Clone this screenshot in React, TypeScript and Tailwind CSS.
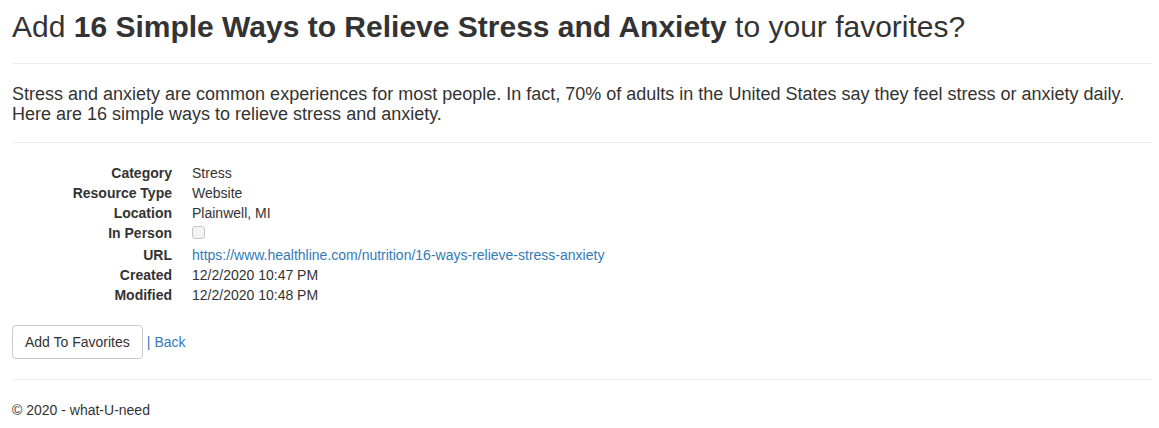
const details = [
  { label: 'Category', value: 'Stress' },
  { label: 'Resource Type', value: 'Website' },
  { label: 'Location', value: 'Plainwell, MI' },
];

const dates = [
  { label: 'Created', value: '12/2/2020 10:47 PM' },
  { label: 'Modified', value: '12/2/2020 10:48 PM' },
];

const App = () => {
  return (
    <div className="bg-white pl-3 pr-[7px] text-[14px] leading-[20px] text-[#333]" style={{ fontFamily: '"Liberation Sans", Arial, Helvetica, sans-serif' }}>
      {/* Title */}
      <h2 className="pt-[10px] text-[30px] leading-[33px] font-normal">
        Add <strong className="font-bold">16 Simple Ways to Relieve Stress and Anxiety</strong> to your favorites?
      </h2>
      <hr className="mt-5 mb-5 border-0 border-t border-[#eee]" />

      {/* Description */}
      <h4 className="text-[18px] leading-[20px] font-normal">
        Stress and anxiety are common experiences for most people. In fact, 70% of adults in the United States say they feel stress or anxiety daily. Here are 16 simple ways to relieve stress and anxiety.
      </h4>
      <hr className="mt-[18px] mb-5 border-0 border-t border-[#eee]" />

      {/* Details */}
      <dl className="mb-5">
        {details.map((d) => (
          <div key={d.label} className="flex h-5">
            <dt className="w-[160px] text-right font-bold">{d.label}</dt>
            <dd className="ml-5">{d.value}</dd>
          </div>
        ))}
        <div className="flex h-5">
          <dt className="w-[160px] text-right font-bold">In Person</dt>
          <dd className="ml-5 pt-[3px]">
            <span className="block w-[13px] h-[13px] rounded-[3px] border border-[#c6c6c6] bg-[#f3f3f3]" />
          </dd>
        </div>
        <div className="flex h-[22px] items-end">
          <dt className="w-[160px] text-right font-bold">URL</dt>
          <dd className="ml-5">
            <a href="#" className="text-[#337ab7]">https://www.healthline.com/nutrition/16-ways-relieve-stress-anxiety</a>
          </dd>
        </div>
        {dates.map((d) => (
          <div key={d.label} className="flex h-5">
            <dt className="w-[160px] text-right font-bold">{d.label}</dt>
            <dd className="ml-5">{d.value}</dd>
          </div>
        ))}
      </dl>

      {/* Actions */}
      <div className="flex items-center">
        <button className="h-[34px] px-3 border border-[#ccc] rounded bg-white text-[#333]">Add To Favorites</button>
        <span className="ml-[4px] text-[#337ab7]">|</span>
        <a href="#" className="ml-[4px] text-[#337ab7]">Back</a>
      </div>

      <hr className="mt-5 mb-5 border-0 border-t border-[#eee]" />
      <footer className="pb-[8px]">
        <p>© 2020 - what-U-need</p>
      </footer>
    </div>
  );
};

export default App;
